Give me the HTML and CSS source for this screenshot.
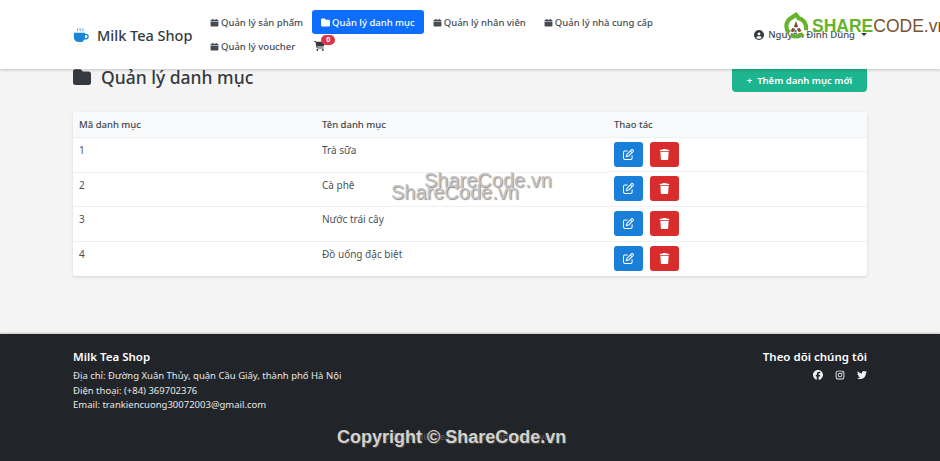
FILE: index.html
```html
<!DOCTYPE html>
<html lang="vi">
<head>
  <meta charset="UTF-8"/>
  <meta name="viewport" content="width=device-width, initial-scale=1.0"/>
  <title>Quản lý danh mục - Milk Tea Shop</title>
  <link rel="stylesheet" href="styles.css">
</head>
<body>
<svg class="icon-defs" xmlns="http://www.w3.org/2000/svg">
  <symbol id="i-folder" viewBox="0 0 512 512"><path d="M64 480H448c35.3 0 64-28.7 64-64V160c0-35.3-28.7-64-64-64H288c-10.1 0-19.6-4.7-25.6-12.8L243.2 57.6C231.1 41.5 212.1 32 192 32H64C28.7 32 0 60.7 0 96V416c0 35.3 28.7 64 64 64z"/></symbol>
  <symbol id="i-box" viewBox="0 0 16 16"><path d="M4 2.5a1 1 0 0 1 2 0V3h4v-.5a1 1 0 0 1 2 0V3h1.5A1.5 1.5 0 0 1 15 4.500V6H1V4.500A1.500 1.500 0 0 1 2.500 3H4zM1 7h14v6.500a1.500 1.500 0 0 1-1.500 1.500h-11A1.500 1.500 0 0 1 1 13.500z"/></symbol>
  <symbol id="i-cart" viewBox="0 0 576 512"><path d="M0 24C0 10.700 10.700 0 24 0H69.500c22 0 41.500 12.800 50.600 32h411c26.300 0 45.500 25 38.600 50.400l-41 152.300c-8.500 31.400-37 53.300-69.500 53.300H170.700l5.400 28.500c2.200 11.300 12.100 19.500 23.600 19.500H488c13.300 0 24 10.700 24 24s-10.700 24-24 24H199.700c-34.600 0-64.300-24.600-70.700-58.500L77.400 54.500c-.7-3.800-4-6.500-7.900-6.500H24C10.700 48 0 37.300 0 24zM128 464a48 48 0 1 1 96 0 48 48 0 1 1 -96 0zm336-48a48 48 0 1 1 0 96 48 48 0 1 1 0-96z"/></symbol>
  <symbol id="i-user" viewBox="0 0 512 512"><path d="M399 384.200C376.900 345.800 335.400 320 288 320H224c-47.400 0-88.900 25.800-111 64.200c35.200 39.200 86.200 63.800 143 63.800s107.800-24.700 143-63.800zM0 256a256 256 0 1 1 512 0A256 256 0 1 1 0 256zm256 16a72 72 0 1 0 0-144 72 72 0 1 0 0 144z"/></symbol>
  <symbol id="i-edit" viewBox="0 0 512 512"><path d="M441 58.900L453.100 71c9.400 9.400 9.400 24.600 0 33.900L424 134.100 377.900 88 407 58.900c9.400-9.400 24.600-9.400 33.900 0zM209.800 256.200L344 121.900 390.100 168 255.800 302.200c-2.900 2.900-6.500 5-10.400 6.100l-58.500 16.700 16.700-58.500c1.100-3.900 3.200-7.500 6.100-10.400zM373.100 25L175.800 222.200c-8.700 8.700-15 19.400-18.300 31.100l-28.600 100c-2.400 8.400-.1 17.400 6.100 23.600s15.200 8.500 23.600 6.100l100-28.600c11.800-3.400 22.500-9.700 31.100-18.300L487 138.900c28.100-28.100 28.100-73.700 0-101.800L474.900 25C446.800-3.100 401.200-3.100 373.100 25zM88 64C39.400 64 0 103.400 0 152V424c0 48.600 39.400 88 88 88H360c48.600 0 88-39.400 88-88V312c0-13.300-10.700-24-24-24s-24 10.700-24 24V424c0 22.100-17.900 40-40 40H88c-22.100 0-40-17.900-40-40V152c0-22.100 17.900-40 40-40H200c13.300 0 24-10.700 24-24s-10.700-24-24-24H88z"/></symbol>
  <symbol id="i-trash" viewBox="0 0 448 512"><path d="M135.200 17.700L128 32H32C14.300 32 0 46.300 0 64S14.300 96 32 96H416c17.700 0 32-14.300 32-32s-14.300-32-32-32H320l-7.200-14.300C307.400 6.800 296.300 0 284.200 0H163.800c-12.100 0-23.200 6.800-28.600 17.700zM416 128H32L53.200 467c1.600 25.300 22.600 45 47.900 45H346.900c25.300 0 46.300-19.700 47.900-45L416 128z"/></symbol>
  <symbol id="i-facebook" viewBox="0 0 512 512"><path d="M512 256C512 114.600 397.400 0 256 0S0 114.600 0 256C0 376 82.700 476.800 194.200 504.500V334.200H141.400V256h52.800V222.300c0-87.100 39.400-127.500 125-127.500c16.200 0 44.200 3.200 55.700 6.400V172c-6-.6-16.500-1-29.600-1c-42 0-58.200 15.900-58.200 57.200V256h83.600l-14.400 78.200H287V510.100C413.800 494.800 512 386.900 512 256z"/></symbol>
  <symbol id="i-instagram" viewBox="0 0 16 16"><path fill-rule="evenodd" d="M4.500 1h7A3.500 3.500 0 0 1 15 4.500v7a3.500 3.500 0 0 1-3.500 3.500h-7A3.500 3.500 0 0 1 1 11.500v-7A3.500 3.500 0 0 1 4.500 1zm0 1.500a2 2 0 0 0-2 2v7a2 2 0 0 0 2 2h7a2 2 0 0 0 2-2v-7a2 2 0 0 0-2-2zM8 4.400a3.600 3.600 0 1 1 0 7.200 3.600 3.600 0 0 1 0-7.200zm0 1.400a2.200 2.200 0 1 0 0 4.400 2.200 2.200 0 0 0 0-4.400zm3.700-2.400a.9.900 0 1 1 0 1.800.9.900 0 0 1 0-1.800z"/></symbol>
  <symbol id="i-twitter" viewBox="0 0 512 512"><path d="M459.370 151.716c.325 4.548.325 9.097.325 13.645 0 138.720-105.583 298.558-298.558 298.558-59.452 0-114.680-17.219-161.137-47.106 8.447.974 16.568 1.299 25.340 1.299 49.055 0 94.213-16.568 130.274-44.832-46.132-.975-84.792-31.188-98.112-72.772 6.498.974 12.995 1.624 19.818 1.624 9.421 0 18.843-1.300 27.614-3.573-48.081-9.747-84.143-51.980-84.143-102.985v-1.299c13.969 7.797 30.214 12.670 47.431 13.319-28.264-18.843-46.781-51.005-46.781-87.391 0-19.492 5.197-37.360 14.294-52.954 51.655 63.675 129.300 105.258 216.365 109.807-1.624-7.797-2.599-15.918-2.599-24.040 0-57.828 46.782-104.934 104.934-104.934 30.213 0 57.502 12.670 76.670 33.137 23.715-4.548 46.456-13.320 66.599-25.340-7.798 24.366-24.366 44.833-46.132 57.827 21.117-2.273 41.584-8.122 60.426-16.243-14.292 20.791-32.161 39.308-52.628 54.253z"/></symbol>
</svg>

<header class="topbar">
  <div class="container topbar-inner">
    <a class="brand" href="#">
      <svg class="brand-icon" viewBox="0 0 18 18">
        <path class="steam" d="M5 1.500c-1 1.200 1 1.800 0 3.200M8 1c-1 1.200 1 2 0 3.500M11 1.500c-1 1.200 1 1.800 0 3.200"/>
        <path d="M1 6.500h12.500v1h1a3 3 0 0 1 0 6.500h-1.600A5.500 5.500 0 0 1 8 17H6.500A5.500 5.500 0 0 1 1 11.500zM13.500 9v3.500h1a1.700 1.700 0 0 0 0-3.500z"/>
      </svg>
      <span>Milk Tea Shop</span>
    </a>
    <nav class="nav">
      <a class="nav-link" href="#"><svg class="nav-icon"><use href="#i-box"/></svg>Quản lý sản phẩm</a>
      <a class="nav-link active" href="#"><svg class="nav-icon"><use href="#i-folder"/></svg>Quản lý danh mục</a>
      <a class="nav-link" href="#"><svg class="nav-icon"><use href="#i-box"/></svg>Quản lý nhân viên</a>
      <a class="nav-link" href="#"><svg class="nav-icon"><use href="#i-box"/></svg>Quản lý nhà cung cấp</a>
      <a class="nav-link" href="#"><svg class="nav-icon"><use href="#i-box"/></svg>Quản lý voucher</a>
      <a class="nav-link cart" href="#"><svg class="cart-icon"><use href="#i-cart"/></svg><span class="badge">0</span></a>
    </nav>
    <a class="user" href="#"><svg class="user-icon"><use href="#i-user"/></svg>Nguyễn Đình Dũng<span class="caret"></span></a>
  </div>
</header>

<main class="container page">
  <div class="page-head">
    <h1><svg class="title-icon"><use href="#i-folder"/></svg>Quản lý danh mục</h1>
    <a class="btn-add" href="#">+<span>Thêm danh mục mới</span></a>
  </div>

  <div class="card">
    <table class="list">
      <thead>
        <tr><th class="col-id">Mã danh mục</th><th class="col-name">Tên danh mục</th><th>Thao tác</th></tr>
      </thead>
      <tbody>
        <tr>
          <td>1</td><td>Trà sữa</td>
          <td class="actions"><a class="btn edit" href="#"><svg><use href="#i-edit"/></svg></a><a class="btn del" href="#"><svg><use href="#i-trash"/></svg></a></td>
        </tr>
        <tr>
          <td>2</td><td>Cà phê</td>
          <td class="actions"><a class="btn edit" href="#"><svg><use href="#i-edit"/></svg></a><a class="btn del" href="#"><svg><use href="#i-trash"/></svg></a></td>
        </tr>
        <tr>
          <td>3</td><td>Nước trái cây</td>
          <td class="actions"><a class="btn edit" href="#"><svg><use href="#i-edit"/></svg></a><a class="btn del" href="#"><svg><use href="#i-trash"/></svg></a></td>
        </tr>
        <tr>
          <td>4</td><td>Đồ uống đặc biệt</td>
          <td class="actions"><a class="btn edit" href="#"><svg><use href="#i-edit"/></svg></a><a class="btn del" href="#"><svg><use href="#i-trash"/></svg></a></td>
        </tr>
      </tbody>
    </table>
  </div>
</main>

<footer class="footer">
  <div class="container footer-top">
    <div>
      <h3>Milk Tea Shop</h3>
      <p>Địa chỉ: Đường Xuân Thủy, quận Cầu Giấy, thành phố Hà Nội</p>
      <p>Điện thoại: (+84) 369702376</p>
      <p>Email: trankiencuong30072003@gmail.com</p>
    </div>
    <div class="follow">
      <h3>Theo dõi chúng tôi</h3>
      <div class="social">
        <svg><use href="#i-facebook"/></svg>
        <svg><use href="#i-instagram"/></svg>
        <svg><use href="#i-twitter"/></svg>
      </div>
    </div>
  </div>
  <p class="copy">© 2024 Milk Tea Shop. All rights reserved.</p>
</footer>

<!-- watermarks stamped over the page -->
<div class="wm-logo">
  <svg viewBox="0 0 40 40">
    <path class="ring" d="M10 30A14 14 0 0 1 14 8l6-4 4 5A14 14 0 0 1 34 26M30 31a14 14 0 0 1-17 2"/>
    <path class="leaf" d="M20 13l3 8-3 1-3-1zM15 23l4 1-3 5-4-2zM25 23l-4 1 3 5 4-2z"/>
  </svg>
  <span class="wm-share">SHARE</span><span class="wm-code">CODE.vn</span>
</div>
<div class="wm-text wm-a">ShareCode.vn</div>
<div class="wm-text wm-b">ShareCode.vn</div>
<div class="wm-copy">Copyright © ShareCode.vn</div>
</body>
</html>
```

FILE: styles.css
```css
* {
  box-sizing: border-box;
}

html, body {
  height: 461px;
  overflow: hidden;
}

body {
  margin: 0;
  background: #f4f4f4;
  color: #212529;
  font-family: "Noto Sans", sans-serif;
  font-size: 10px;
  display: flex;
  flex-direction: column;
}

a {
  color: inherit;
  text-decoration: none;
}

.icon-defs {
  display: none;
}

.container {
  width: 794px;
  margin: 0 auto;
}

/* top bar */
.topbar {
  position: relative;
  z-index: 2;
  height: 69px;
  background: #fff;
  box-shadow: 0 1px 3px rgba(0, 0, 0, 0.2);
  flex: none;
}

.topbar-inner {
  display: flex;
  align-items: center;
  height: 100%;
}

.brand {
  display: flex;
  align-items: center;
  gap: 8px;
  width: 128px;
  flex: none;
  font-size: 14.5px;
  font-weight: 500;
  color: #333a40;
}

.brand-icon {
  width: 16px;
  height: 16px;
  fill: #1a86d8;
}

.brand-icon .steam {
  fill: none;
  stroke: #1a86d8;
  stroke-width: 0.9;
}

.nav {
  display: flex;
  flex-wrap: wrap;
  align-content: center;
  width: 532px;
  margin-left: 0;
  margin-top: -1px;
}

.nav-link {
  display: flex;
  align-items: center;
  gap: 2px;
  height: 24px;
  padding: 0 9px;
  font-size: 9.5px;
  font-weight: 500;
  color: #444b52;
  border-radius: 3px;
}

.nav-link.active {
  background: #0d6efd;
  color: #fff;
}

.nav-icon {
  width: 9px;
  height: 9px;
  fill: currentColor;
}

.cart {
  position: relative;
  padding-left: 10px;
}

.cart-icon {
  width: 11px;
  height: 10px;
  fill: #343a40;
}

.badge {
  position: absolute;
  left: 17px;
  top: 1px;
  width: 14px;
  height: 10px;
  border-radius: 5px;
  background: #dc3545;
  color: #fff;
  font-size: 7px;
  font-weight: 700;
  line-height: 10px;
  text-align: center;
}

.user {
  display: flex;
  align-items: center;
  gap: 4px;
  margin-left: auto;
  font-size: 9.5px;
  font-weight: 500;
  color: #444b52;
}

.user-icon {
  width: 10px;
  height: 10px;
  fill: #343a40;
}

.caret {
  width: 0;
  height: 0;
  margin-left: 2px;
  border: 3px solid transparent;
  border-top-color: #343a40;
  border-bottom: 0;
}

/* page body */
.page {
  flex: 1;
  margin-top: -9px;
}

.page-head {
  display: flex;
  justify-content: space-between;
  align-items: center;
  height: 32px;
  margin-bottom: 20px;
}

.page-head h1 {
  display: flex;
  align-items: center;
  gap: 10px;
  margin: 2px 0 0;
  font-size: 17.5px;
  font-weight: 500;
  color: #343a40;
}

.title-icon {
  width: 18px;
  height: 18px;
  fill: #343a40;
}

.btn-add {
  display: flex;
  align-items: center;
  justify-content: center;
  gap: 5px;
  width: 135px;
  height: 32px;
  padding-top: 9px;
  background: #1db58f;
  border-radius: 4px;
  color: #fff;
  font-size: 9.5px;
  font-weight: 600;
}

.btn-add::first-line {
  font-size: 14px;
}

.card {
  background: #fff;
  border-radius: 3px;
  box-shadow: 0 1px 3px rgba(0, 0, 0, 0.12);
}

.list {
  width: 100%;
  border-collapse: collapse;
  table-layout: fixed;
}

.list th {
  height: 25px;
  padding: 0 6px;
  background: #f8f9fa;
  border-bottom: 1px solid #eef0f2;
  font-size: 9.5px;
  font-weight: 500;
  color: #3f454b;
  text-align: left;
}

.col-id {
  width: 243px;
}

.col-name {
  width: 292px;
}

.list td {
  height: 34.7px;
  padding: 4px 6px 5px;
  border-bottom: 1px solid #eef0f2;
  color: #4b5157;
  line-height: 16px;
  vertical-align: top;
}

.list tr:last-child td {
  border-bottom: 0;
}

.actions {
  display: flex;
  gap: 7px;
}

.btn {
  display: flex;
  align-items: center;
  justify-content: center;
  width: 29px;
  height: 25px;
  border-radius: 3px;
}

.btn svg {
  width: 11px;
  height: 11px;
  fill: #fff;
}

.edit {
  background: #1a7fd9;
}

.del {
  background: #d92d2d;
}

/* footer */
.footer {
  flex: none;
  height: 127px;
  background: #212529;
  color: #e6e7e8;
  box-shadow: 0 -1px 2px rgba(0, 0, 0, 0.2);
}

.footer-top {
  display: flex;
  justify-content: space-between;
  padding-top: 15px;
}

.footer h3 {
  margin: 0 0 4px;
  font-size: 11.5px;
  line-height: 16px;
  font-weight: 600;
  color: #fff;
}

.footer-top p {
  margin: 0;
  font-size: 9.5px;
  line-height: 14.500px;
}

.follow {
  text-align: right;
}

.social {
  display: flex;
  justify-content: flex-end;
  gap: 12px;
  margin-top: 5px;
}

.social svg {
  width: 10px;
  height: 10px;
  fill: #f0f0f0;
}

.copy {
  margin: 17px 0 0;
  font-size: 9px;
  text-align: center;
  color: #5a5f64;
}

/* watermarks */
.wm-logo {
  position: absolute;
  z-index: 3;
  left: 782px;
  top: 11px;
  display: flex;
  align-items: center;
  height: 30px;
  padding-right: 10px;
  font-family: "Liberation Sans", sans-serif;
  font-size: 17.5px;
  line-height: 30px;
}

.wm-logo svg {
  width: 28px;
  height: 28px;
  margin-right: 2px;
}

.wm-logo .ring {
  fill: none;
  stroke: #66b32e;
  stroke-width: 6;
}

.wm-logo .leaf {
  fill: #7a5230;
}

.wm-share {
  color: #66b32e;
  font-weight: 700;
}

.wm-code {
  color: #7a5230;
}

.wm-text {
  position: absolute;
  z-index: 3;
  font-family: "Liberation Sans", sans-serif;
  font-size: 20px;
  line-height: 22px;
  color: #c4c4c4;
  text-shadow: 1px 1px 1px #8e8e8e;
}

.wm-a {
  left: 424px;
  top: 169px;
}

.wm-b {
  left: 391px;
  top: 181px;
}

.wm-copy {
  position: absolute;
  z-index: 3;
  left: 337px;
  top: 426px;
  font-family: "Liberation Sans", sans-serif;
  font-size: 18px;
  line-height: 22px;
  font-weight: 700;
  color: #d2d2d2;
  text-shadow: 1px 1px 1px #5c4a36;
}
```
